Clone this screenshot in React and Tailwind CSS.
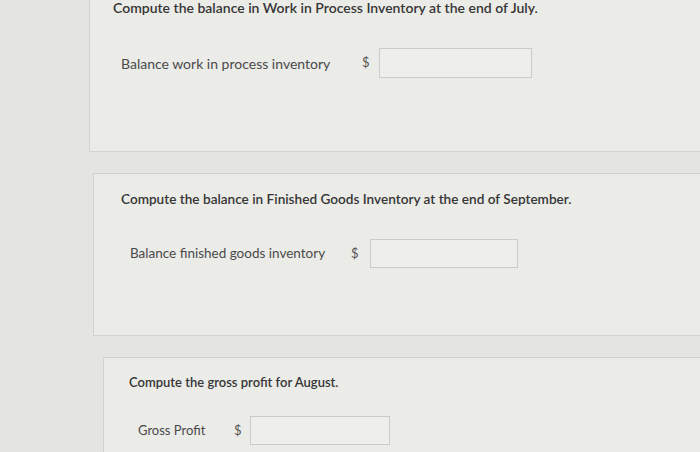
export default function App() {
  return (
    <div className="w-[700px] h-[452px] overflow-hidden bg-[#e4e4e0] font-['Lato','Liberation_Sans',sans-serif]">
      {/* Work in process */}
      <div className="ml-[89px] mt-[-12px] h-[164px] w-[640px] border border-[#d2d2ce] bg-[#ebebe8] pl-[23px] pt-[10px]">
        <p className="text-[14px] leading-[18px] font-semibold text-[#363636]">
          Compute the balance in Work in Process Inventory at the end of July.
        </p>
        <div className="mt-[31px] flex items-center pl-[8px]">
          <span className="w-[241px] text-[14px] text-[#4a4a4a]">Balance work in process inventory</span>
          <span className="w-[17px] text-[13px] text-[#555]">$</span>
          <input className="h-[30px] w-[153px] border border-[#cbcbc7] bg-[#eeeeeb] outline-none" />
        </div>
      </div>

      {/* Finished goods */}
      <div className="ml-[93px] mt-[21px] h-[163px] w-[640px] border border-[#d2d2ce] bg-[#ebebe8] pl-[27px] pt-[15px]">
        <p className="text-[13.6px] leading-[20px] font-semibold text-[#363636]">
          Compute the balance in Finished Goods Inventory at the end of September.
        </p>
        <div className="mt-[30px] flex items-center pl-[9px]">
          <span className="w-[221px] text-[13.5px] text-[#4a4a4a]">Balance finished goods inventory</span>
          <span className="w-[19px] text-[13px] text-[#555]">$</span>
          <input className="h-[29px] w-[148px] border border-[#cbcbc7] bg-[#eeeeeb] outline-none" />
        </div>
      </div>

      {/* Gross profit */}
      <div className="ml-[103px] mt-[21px] h-[120px] w-[640px] border border-[#d2d2ce] bg-[#ebebe8] pl-[25px] pt-[14px]">
        <p className="text-[13px] leading-[20px] font-semibold text-[#363636]">
          Compute the gross profit for August.
        </p>
        <div className="mt-[24px] flex items-center pl-[9px]">
          <span className="w-[96px] text-[13px] text-[#4a4a4a]">Gross Profit</span>
          <span className="w-[16px] text-[13px] text-[#555]">$</span>
          <input className="h-[29px] w-[140px] border border-[#cbcbc7] bg-[#eeeeeb] outline-none" />
        </div>
      </div>
    </div>
  )
}
